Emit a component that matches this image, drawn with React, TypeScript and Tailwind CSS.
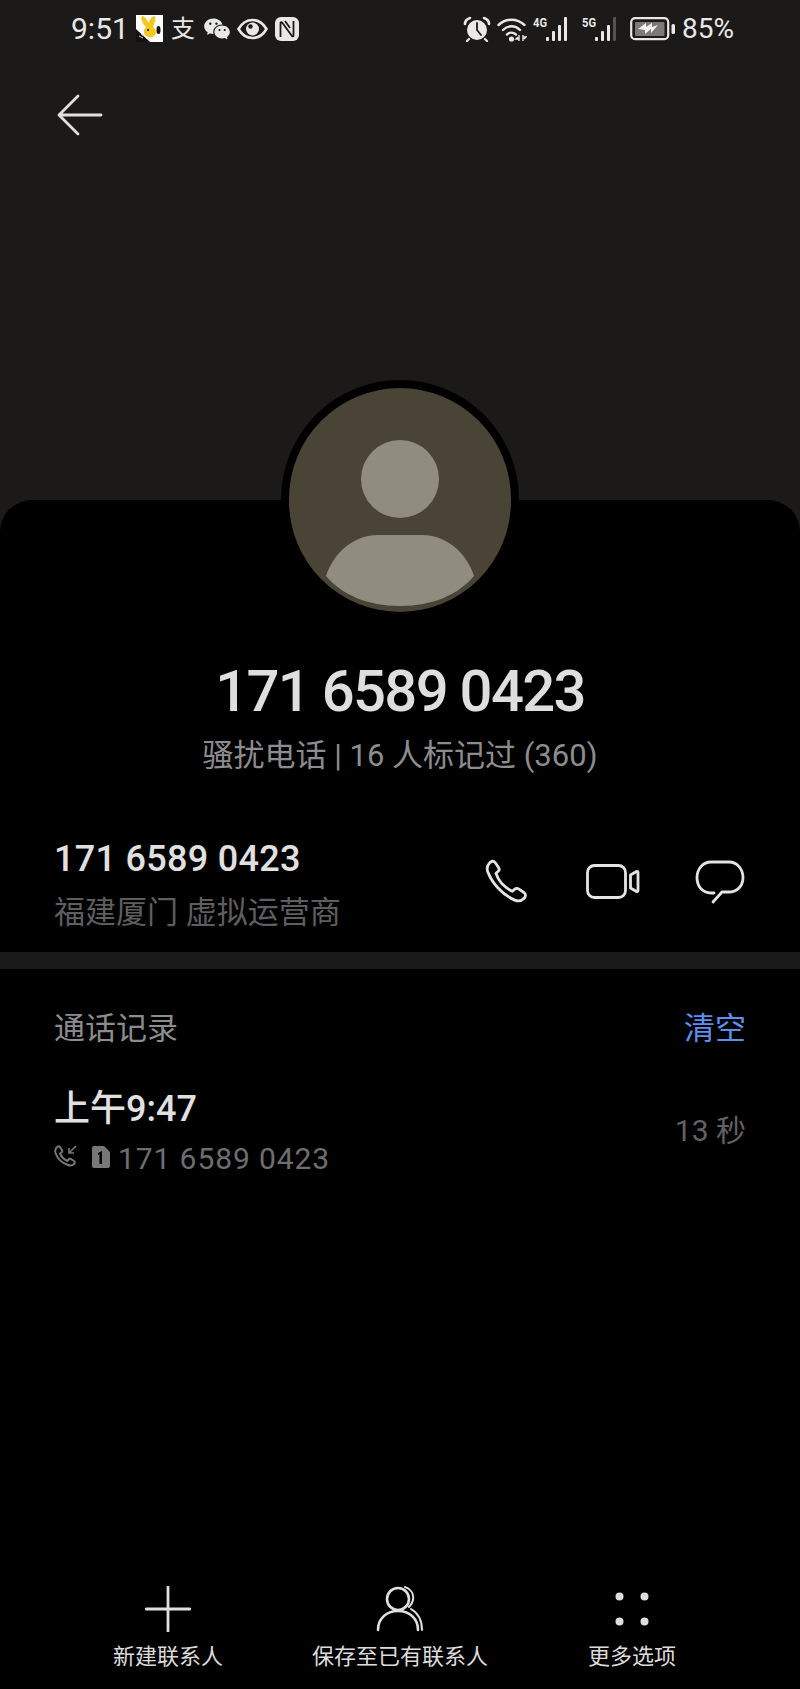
import { RiWechatFill } from "react-icons/ri";

const cjk = "font-['Roboto','Noto_Sans_CJK_SC',sans-serif]";

function RabbitIcon() {
  return (
    <svg width="27" height="27" viewBox="0 0 27 27" className="shrink-0">
      <rect width="27" height="27" fill="#fff" />
      <path d="M0 14 L14 27 L0 27Z" fill="#111" />
      <path d="M6 1c3 0 5 4 6.500 7 1-3 3-7 6-7 2 2 0 8-1.500 11 3 2 4 5 2 8-2 3-7 3-10 0-2-3-1-6 1-8C7 9 4 4 6 1Z" fill="#f4c81e" />
      <ellipse cx="22.500" cy="15" rx="2" ry="4" fill="#111" />
      <circle cx="12" cy="15" r="1" fill="#111" />
      <path d="M3 21l4 2M5 19l3 2" stroke="#ccc" strokeWidth="1" />
    </svg>
  );
}

function EyeIcon() {
  return (
    <svg width="31" height="22" viewBox="0 0 31 22" fill="none" className="shrink-0">
      <path d="M1.500 11C5 5 10 2 15.500 2S26 5 29.500 11C26 17 21 20 15.500 20S5 17 1.500 11Z" stroke="#e8e8e8" strokeWidth="2.600" />
      <circle cx="15.500" cy="11" r="6.500" fill="#e8e8e8" />
      <circle cx="13.500" cy="8.500" r="2.200" fill="#1c1a18" />
    </svg>
  );
}

function NfcIcon() {
  return (
    <svg width="24" height="24" viewBox="0 0 24 24" fill="none" className="shrink-0">
      <rect width="24" height="24" rx="6" fill="#e8e8e8" />
      <path d="M5.500 20V6c0-1 1-1.300 1.600-.5L17 19c.6.800 1.500.5 1.500-.5V4" stroke="#1c1a18" strokeWidth="1.800" />
      <path d="M10 4l5 7" stroke="#1c1a18" strokeWidth="1.800" />
    </svg>
  );
}

function AlarmIcon() {
  return (
    <svg width="28" height="26" viewBox="0 0 28 26" fill="none" className="shrink-0">
      <circle cx="14" cy="14" r="10" fill="#e8e8e8" />
      <path d="M14 7v7l4 5" stroke="#1c1a18" strokeWidth="1.800" strokeLinecap="round" />
      <path d="M2 8c0-3 2-5 5-6M26 8c0-3-2-5-5-6" stroke="#e8e8e8" strokeWidth="2.600" strokeLinecap="round" />
      <path d="M6 23l-2 2M22 23l2 2" stroke="#e8e8e8" strokeWidth="2.200" strokeLinecap="round" />
    </svg>
  );
}

function WifiIcon() {
  return (
    <svg width="30" height="26" viewBox="0 0 30 26" fill="none" className="shrink-0">
      <path d="M1.500 9C9 2 20 2 27.500 9" stroke="#e8e8e8" strokeWidth="2.400" strokeLinecap="round" />
      <path d="M6 14c5-5 12-5 17 0" stroke="#e8e8e8" strokeWidth="2.400" strokeLinecap="round" />
      <path d="M10 18.500c3-2.500 6-2.500 9 0" stroke="#e8e8e8" strokeWidth="2.400" strokeLinecap="round" />
      <circle cx="14.500" cy="23" r="2.600" fill="#e8e8e8" />
      <path d="M22 19v6M21 21l-2 2 3 0M26 19v6M27 23l2-2-3 0" stroke="#e8e8e8" strokeWidth="1.400" />
    </svg>
  );
}

function SignalIcon({ label, dimLast }: { label: string; dimLast?: boolean }) {
  return (
    <svg width="42" height="26" viewBox="0 0 42 26" className="shrink-0">
      <rect x="13" y="21" width="3" height="4" rx="1" fill="#e8e8e8" />
      <rect x="19" y="15" width="3" height="10" rx="1" fill="#e8e8e8" />
      <rect x="25" y="9" width="3" height="16" rx="1" fill="#e8e8e8" />
      <rect x="31" y="1" width="3" height="24" rx="1" fill={dimLast ? "#55534f" : "#e8e8e8"} />
      <text x="0" y="11" fontSize="13" fontWeight="700" fill="#e8e8e8" fontFamily="Roboto, sans-serif" textLength="14" lengthAdjust="spacingAndGlyphs">{label}</text>
    </svg>
  );
}

function BatteryIcon() {
  return (
    <svg width="46" height="24" viewBox="0 0 46 24" fill="none" className="shrink-0">
      <rect x="1.200" y="1.200" width="37" height="21" rx="4" stroke="#e8e8e8" strokeWidth="2.200" />
      <rect x="5" y="5" width="29.500" height="14" rx="1" fill="#7c7a76" />
      <path d="M8 12l8-6 0 4 6-4 0 4 6-2-7 8 0-4-6 5 0-4Z" fill="#f2f2f2" />
      <rect x="41.500" y="7" width="3.500" height="10" rx="1.500" fill="#e8e8e8" />
    </svg>
  );
}

export default function App() {
  return (
    <div className={`w-[800px] h-[1689px] flex flex-col bg-[#1c1a18] overflow-hidden ${cjk}`}>
      <div className="h-[500px] shrink-0 flex flex-col">
        <div className="h-[56px] pl-[71px] pr-[66px] flex items-center justify-between pt-[1px]">
          <div className="flex items-center">
            <span className="text-[30px] text-[#e8e8e8] leading-none w-[65px]">9:51</span>
            <RabbitIcon />
            <span className="ml-[8px] w-[29px] text-[24px] leading-none text-[#e8e8e8]">支</span>
            <RiWechatFill className="ml-[3px] text-[#e8e8e8]" size={28} />
            <span className="ml-[6px] flex"><EyeIcon /></span>
            <span className="ml-[7px] flex"><NfcIcon /></span>
          </div>
          <div className="flex items-center">
            <AlarmIcon />
            <span className="ml-[6px] flex"><WifiIcon /></span>
            <span className="ml-[6px] flex"><SignalIcon label="4G" /></span>
            <span className="ml-[7px] flex"><SignalIcon label="5G" dimLast /></span>
            <span className="ml-[6px] flex"><BatteryIcon /></span>
            <span className="ml-[6px] text-[28px] text-[#e8e8e8] leading-none">85%</span>
          </div>
        </div>
        <div className="pl-[57px] pt-[38px]">
          <svg width="46" height="42" viewBox="0 0 46 42" fill="none">
            <path d="M44 21H2M21 2L2 21l19 19" stroke="#e0e0de" strokeWidth="2.800" strokeLinecap="round" strokeLinejoin="round" />
          </svg>
        </div>
      </div>

      <div className="flex-1 bg-black rounded-t-[32px] flex flex-col items-center">
        <div className="-mt-[120px] w-[238px] h-[240px] rounded-full bg-black flex items-center justify-center shrink-0">
          <div className="w-[222px] h-[224px] rounded-full bg-[#4a4436] overflow-hidden">
            <svg width="222" height="224" viewBox="0 0 222 224">
              <circle cx="111" cy="91" r="39" fill="#918c80" />
              <path d="M37 188c8-24 28-41 52-41h44c24 0 44 17 52 41-16 19-42 30-74 30s-58-11-74-30Z" fill="#918c80" />
            </svg>
          </div>
        </div>

        <h1 className="mt-[39px] text-[58px] leading-[64px] text-[#dedede] font-medium tracking-[-1.7px]">171 6589 0423</h1>
        <p className="mt-[13px] text-[31px] leading-[40px] text-[#8d8d8d] whitespace-nowrap">骚扰电话 | 16 人标记过 (360)</p>

        <div className="w-full mt-[61px] pl-[54px] pr-[55px] flex items-center justify-between">
          <div className="flex flex-col">
            <span className="text-[36px] leading-[44px] text-[#e0e0e0] font-medium tracking-[0.3px]">171 6589 0423</span>
            <span className="mt-[12px] text-[31px] leading-[40px] text-[#5e5e5e]">福建厦门 虚拟运营商</span>
          </div>
          <div className="flex items-center -mt-[6px]">
            <svg width="46" height="46" viewBox="0 0 46 46" fill="none">
              <path d="M7 3.500c2-2 4-1.500 5.500.5l3 4.500c1 1.500.8 3-.5 4l-2 1.800c1 3.500 3 7 6 10.500 3.500 3.500 7 6 10.500 7.500l2-2c1.500-1.200 3-1.200 4.500-.2l5 3.500c2 1.500 2 4-.2 6-2.500 2.500-5.500 3-9 1.500-6-2.500-12-6.800-17-12.300-4.500-5-8-10.500-9.800-15.500C3.500 10 4 6.500 7 3.500Z" stroke="#e4e4e4" strokeWidth="2.800" strokeLinejoin="round" />
            </svg>
            <svg width="54" height="36" viewBox="0 0 54 36" fill="none" className="ml-[57px]">
              <rect x="1.500" y="1.500" width="38" height="32" rx="7" stroke="#e4e4e4" strokeWidth="2.800" />
              <path d="M44.500 11l6-3.500c.8-.4 1.500 0 1.500 1v18c0 1-.7 1.400-1.500 1l-6-3.500Z" stroke="#e4e4e4" strokeWidth="2.800" strokeLinejoin="round" />
            </svg>
            <svg width="50" height="44" viewBox="0 0 50 44" fill="none" className="ml-[55px]">
              <path d="M19 33h-3C7 33 2 26 2 17.500S8 2 16 2h18c8 0 14 7 14 15.500S42 32 34 32h-7L18 42" stroke="#e4e4e4" strokeWidth="2.800" strokeLinecap="round" strokeLinejoin="round" />
            </svg>
          </div>
        </div>

        <div className="w-full h-[17px] mt-[19px] bg-[#1a1a1a] shrink-0" />

        <div className="w-full mt-[40px] pl-[54px] pr-[54px] flex items-center justify-between">
          <span className="text-[31px] leading-[40px] text-[#8c8c8c]">通话记录</span>
          <span className="text-[31px] leading-[40px] text-[#5f8fec]">清空</span>
        </div>

        <div className="w-full mt-[38px] pl-[54px] pr-[54px] flex items-center justify-between">
          <div className="flex flex-col">
            <span className="text-[36px] leading-[44px] text-[#e0e0e0] font-medium">上午9:47</span>
            <div className="mt-[8px] flex items-center">
              <svg width="24" height="24" viewBox="0 0 24 24" fill="none" className="-mt-[4px]">
                <path d="M3 2c1-1 2-1 3 0l2 3c.5 1 .3 1.800-.5 2.500L6 8.500c1.500 3.500 4 6 7.500 7.500l1-1.500c.7-.8 1.500-1 2.500-.5l3 2c1 1 1 2 0 3-1.500 1.500-3.500 2-6 1C8 18 3.500 13.500 1.500 8c-.7-2.500-.2-4.500 1.500-6Z" stroke="#777" strokeWidth="2" />
                <path d="M22 1l-7 7M15 3v5h5" stroke="#777" strokeWidth="1.600" />
              </svg>
              <svg width="20" height="24" viewBox="0 0 20 24" className="ml-[13px] -mt-[4px]">
                <path d="M3 1h10l6 6v14a2 2 0 0 1-2 2H3a2 2 0 0 1-2-2V3a2 2 0 0 1 2-2Z" fill="#777" />
                <path d="M7 8l4-2v13H8.500V9.500L7 10Z" fill="#000" />
              </svg>
              <span className="ml-[7px] text-[30px] leading-[40px] text-[#6e6e6e] tracking-[0.9px]">171 6589 0423</span>
            </div>
          </div>
          <span className="text-[30px] leading-[40px] text-[#626262] -mt-[4px]">13 秒</span>
        </div>

        <div className="mt-auto w-full h-[103px] grid grid-cols-3 px-[52px]">
          <div className="flex flex-col items-center">
            <svg width="46" height="46" viewBox="0 0 46 46" fill="none">
              <path d="M23 1v44M1 23h44" stroke="#e0e0e0" strokeWidth="2.800" strokeLinecap="round" />
            </svg>
            <span className="mt-[10px] text-[22px] leading-[30px] text-[#dcdcdc] whitespace-nowrap">新建联系人</span>
          </div>
          <div className="flex flex-col items-center">
            <svg width="48" height="46" viewBox="0 0 48 46" fill="none">
              <circle cx="22" cy="13" r="11" stroke="#e0e0e0" strokeWidth="2.600" />
              <path d="M2 44c0-11 8-19 20-19s20 8 20 19" stroke="#e0e0e0" strokeWidth="2.600" strokeLinecap="round" />
              <path d="M29 1c6 2 9 7 8 13-.5 3-2 5-4 7M35 23c7 4 11 11 11 21" stroke="#e0e0e0" strokeWidth="2" strokeLinecap="round" />
            </svg>
            <span className="mt-[10px] text-[22px] leading-[30px] text-[#dcdcdc] whitespace-nowrap">保存至已有联系人</span>
          </div>
          <div className="flex flex-col items-center">
            <svg width="46" height="46" viewBox="0 0 46 46" fill="#dedede">
              <circle cx="10.500" cy="10.500" r="4" />
              <circle cx="35.500" cy="10.500" r="4" />
              <circle cx="10.500" cy="35.500" r="4" />
              <circle cx="35.500" cy="35.500" r="4" />
            </svg>
            <span className="mt-[10px] text-[22px] leading-[30px] text-[#dcdcdc] whitespace-nowrap">更多选项</span>
          </div>
        </div>
      </div>
    </div>
  );
}
